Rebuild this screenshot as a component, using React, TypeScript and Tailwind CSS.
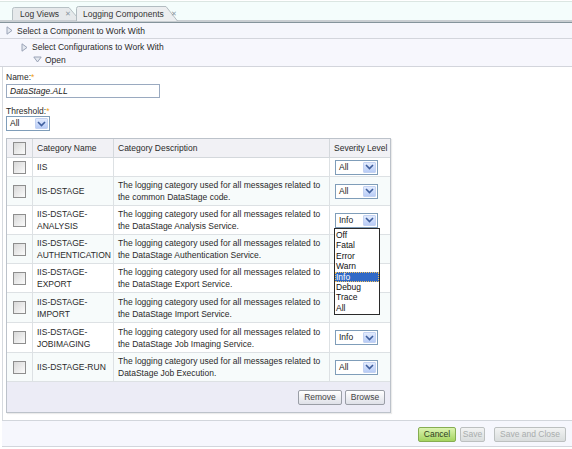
import React from "react";

function Chevron() {
  return (
    <svg width="9" height="6" viewBox="0 0 9 6">
      <path d="M1 1 L4.5 4.5 L8 1" fill="none" stroke="#3f5f9e" strokeWidth="1.6" />
    </svg>
  );
}

function Sel({ value, cls }: { value: string; cls: string }) {
  return (
    <div className={`flex items-center h-[15px] border border-[#7f9db9] bg-white ${cls}`}>
      <span className="flex-1 pl-[3px] leading-[13px] text-[#222]">{value}</span>
      <span className="w-[13px] h-[11px] mr-[1px] flex items-center justify-center rounded-[1px] bg-gradient-to-b from-[#e2ebfd] to-[#b9ccf6] border border-[#c3d2f2]">
        <Chevron />
      </span>
    </div>
  );
}

function Check() {
  return <span className="block w-[13px] h-[13px] border border-[#8e8e8e] bg-gradient-to-br from-[#d8d8d8] to-[#fbfbfb]" />;
}

function RightTri() {
  return (
    <svg width="7" height="9" viewBox="0 0 7 9">
      <path d="M1 0.8 L6 4.5 L1 8.2 Z" fill="#e4e8f0" stroke="#9aa3b6" strokeWidth="1" />
    </svg>
  );
}

function DownTri() {
  return (
    <svg width="9" height="7" viewBox="0 0 9 7">
      <path d="M0.8 1 L8.2 1 L4.5 6 Z" fill="#e4e8f0" stroke="#9aa3b6" strokeWidth="1" />
    </svg>
  );
}

type Row = {
  name: React.ReactNode;
  desc: React.ReactNode;
  sev: string | null;
  h: string;
  bg: string;
};

const L1 = "The logging category used for all messages related to";

const rows: Row[] = [
  { name: "IIS", desc: null, sev: "All", h: "h-[19px]", bg: "bg-white" },
  { name: "IIS-DSTAGE", desc: <>{L1}<br />the common DataStage code.</>, sev: "All", h: "h-[29px]", bg: "bg-[#f7fbfb]" },
  { name: <>IIS-DSTAGE-<br />ANALYSIS</>, desc: <>{L1}<br />the DataStage Analysis Service.</>, sev: "Info", h: "h-[29px]", bg: "bg-white" },
  { name: <>IIS-DSTAGE-<br />AUTHENTICATION</>, desc: <>{L1}<br />the DataStage Authentication Service.</>, sev: null, h: "h-[29px]", bg: "bg-[#f7fbfb]" },
  { name: <>IIS-DSTAGE-<br />EXPORT</>, desc: <>{L1}<br />the DataStage Export Service.</>, sev: null, h: "h-[29px]", bg: "bg-white" },
  { name: <>IIS-DSTAGE-<br />IMPORT</>, desc: <>{L1}<br />the DataStage Import Service.</>, sev: "", h: "h-[30px]", bg: "bg-[#f7fbfb]" },
  { name: <>IIS-DSTAGE-<br />JOBIMAGING</>, desc: <>{L1}<br />the DataStage Job Imaging Service.</>, sev: "Info", h: "h-[30px]", bg: "bg-white" },
  { name: "IIS-DSTAGE-RUN", desc: <>{L1}<br />DataStage Job Execution.</>, sev: "All", h: "h-[29px]", bg: "bg-[#f7fbfb]" },
];

const opts = ["Off", "Fatal", "Error", "Warn", "Info", "Debug", "Trace", "All"];

export default function App() {
  return (
    <div className="relative w-[572px] h-[449px] overflow-hidden bg-white text-[#2a2a2a] font-['Liberation_Sans',Arial,sans-serif] text-[8.5px] leading-[12px]">
      {/* Tab bar */}
      <div className="h-[19px] bg-[#f4fdfc] border-t border-[#dbe6e2] mt-[1px] relative">
        <div className="absolute left-[12px] top-[5px] w-[68px] h-[13px]">
          <svg className="absolute inset-0" width="68" height="13" viewBox="0 0 68 13">
            <path d="M0.5 13 L0.5 2.5 Q0.5 0.5 2.5 0.5 L57 0.5 L67.5 13" fill="#e6e9eb" stroke="#b7c1c5" strokeWidth="1" />
          </svg>
          <div className="relative flex items-center h-[13px] pl-[8px] gap-[6px] text-[#333]">
            <span>Log Views</span>
            <span className="text-[7px] text-[#8a96a0]">✕</span>
          </div>
        </div>
        <div className="absolute left-[76px] top-[4px] w-[102px] h-[15px]">
          <svg className="absolute inset-0" width="102" height="15" viewBox="0 0 102 15">
            <path d="M0.5 15 L0.5 2.5 Q0.5 0.5 2.5 0.5 L90 0.5 L101.5 15" fill="#eceef0" stroke="#b2bcc1" strokeWidth="1" />
          </svg>
          <div className="relative flex items-center h-[15px] pl-[7px] gap-[7px] text-[#333]">
            <span>Logging Components</span>
            <span className="text-[7px] text-[#8a96a0]">✕</span>
          </div>
        </div>
      </div>
      <div className="h-[2px] bg-[#c9ced2]" />
      <div className="h-[1px] bg-[#84939b]" />

      {/* Breadcrumb sections */}
      <div className="h-[16px] bg-[#f5f6fc] border-b border-[#d3d5dc] flex items-center pl-[6px] gap-[4px]">
        <RightTri />
        <span>Select a Component to Work With</span>
      </div>
      <div className="h-[28px] bg-[#f7f7fd] border-b border-[#d3d5dc] flex flex-col pt-[2px]">
        <div className="h-[13px] flex items-center pl-[21px] gap-[4px]">
          <RightTri />
          <span>Select Configurations to Work With</span>
        </div>
        <div className="h-[13px] flex items-center pl-[33px] gap-[3px]">
          <DownTri />
          <span>Open</span>
        </div>
      </div>

      {/* Main */}
      <div className="ml-[2px] border-l border-[#d6dadf] h-[353px] pl-[3px] pt-[5px] flex flex-col">
        <div className="h-[10px] leading-[10px]">
          Name:<span className="text-[#f0a020]">*</span>
        </div>
        <div className="mt-[2px] w-[154px] h-[14px] border border-[#9aaac0] bg-white flex items-center pl-[3px] italic text-[#222]">
          DataStage.ALL
        </div>
        <div className="mt-[8px] h-[10px] leading-[10px]">
          Threshold:<span className="text-[#f0a020]">*</span>
        </div>
        <Sel value="All" cls="w-[44px] mt-[0px]" />

        {/* Table */}
        <div className="mt-[7px] w-[385px] border border-[#bcc2ca] shadow-[1px_1px_1px_rgba(0,0,0,0.08)] flex flex-col">
          <div className="flex h-[19px] bg-[#f1f1f5] border-b border-[#d4d8dc]">
            <div className="w-[26px] border-r border-[#d4d8dc] flex items-center justify-center"><Check /></div>
            <div className="w-[81px] border-r border-[#d4d8dc] flex items-center pl-[4px]">Category Name</div>
            <div className="w-[216px] border-r border-[#d4d8dc] flex items-center pl-[4px]">Category Description</div>
            <div className="flex-1 flex items-center pl-[4px]">Severity Level</div>
          </div>
          {rows.map((r, i) => (
            <div key={i} className={`flex border-b border-[#dde1e4] ${r.h} ${r.bg}`}>
              <div className="w-[26px] border-r border-[#dde1e4] flex items-center justify-center"><Check /></div>
              <div className="w-[81px] border-r border-[#dde1e4] flex items-center pl-[4px]">{r.name}</div>
              <div className="w-[216px] border-r border-[#dde1e4] flex items-center pl-[4px]">{r.desc}</div>
              <div className="flex-1 flex items-center pl-[5px]">
                {r.sev !== null && <Sel value={r.sev} cls="w-[43px]" />}
              </div>
            </div>
          ))}
          <div className="h-[30px] bg-[#ececf6] flex items-center justify-end pr-[5px] gap-[3px]">
            <button className="h-[15px] w-[44px] border border-[#9a9ea6] rounded-[2px] bg-gradient-to-b from-[#ffffff] to-[#dfe1e8] text-[#444] leading-[13px]">Remove</button>
            <button className="h-[15px] w-[40px] border border-[#9a9ea6] rounded-[2px] bg-gradient-to-b from-[#ffffff] to-[#dfe1e8] text-[#444] leading-[13px]">Browse</button>
          </div>
        </div>
      </div>

      {/* Bottom bar */}
      <div className="ml-[2px] h-[27px] border-t border-b border-[#d2d6dc] bg-[#f6f7fd] flex items-center justify-end pr-[6px] pt-[2px]">
        <button className="h-[15px] w-[38px] border border-[#86ad52] rounded-[2px] bg-gradient-to-b from-[#dcf3b0] to-[#a4d45f] text-[#2d3d1c] leading-[13px]">Cancel</button>
        <button className="ml-[4px] h-[15px] w-[25px] border border-[#bcc0c0] rounded-[2px] bg-gradient-to-b from-[#f2f3f3] to-[#d9dddd] text-[#a9adad] leading-[13px]">Save</button>
        <button className="ml-[9px] h-[15px] w-[72px] border border-[#bcc0c0] rounded-[2px] bg-gradient-to-b from-[#f2f3f3] to-[#d9dddd] text-[#a9adad] leading-[13px]">Save and Close</button>
      </div>

      {/* Open dropdown list */}
      <div className="absolute left-[334px] top-[228px] w-[46px] h-[87px] border border-[#2a2a2a] bg-white flex flex-col pt-[1px]">
        {opts.map((o) => (
          <div
            key={o}
            className={`h-[10.4px] leading-[10.4px] pl-[1px] text-[8.5px] ${o === "Info" ? "bg-[#3169c6] text-white outline outline-1 outline-dotted outline-[#f0c060] -outline-offset-1" : "text-[#111]"}`}
          >
            {o}
          </div>
        ))}
      </div>
    </div>
  );
}
